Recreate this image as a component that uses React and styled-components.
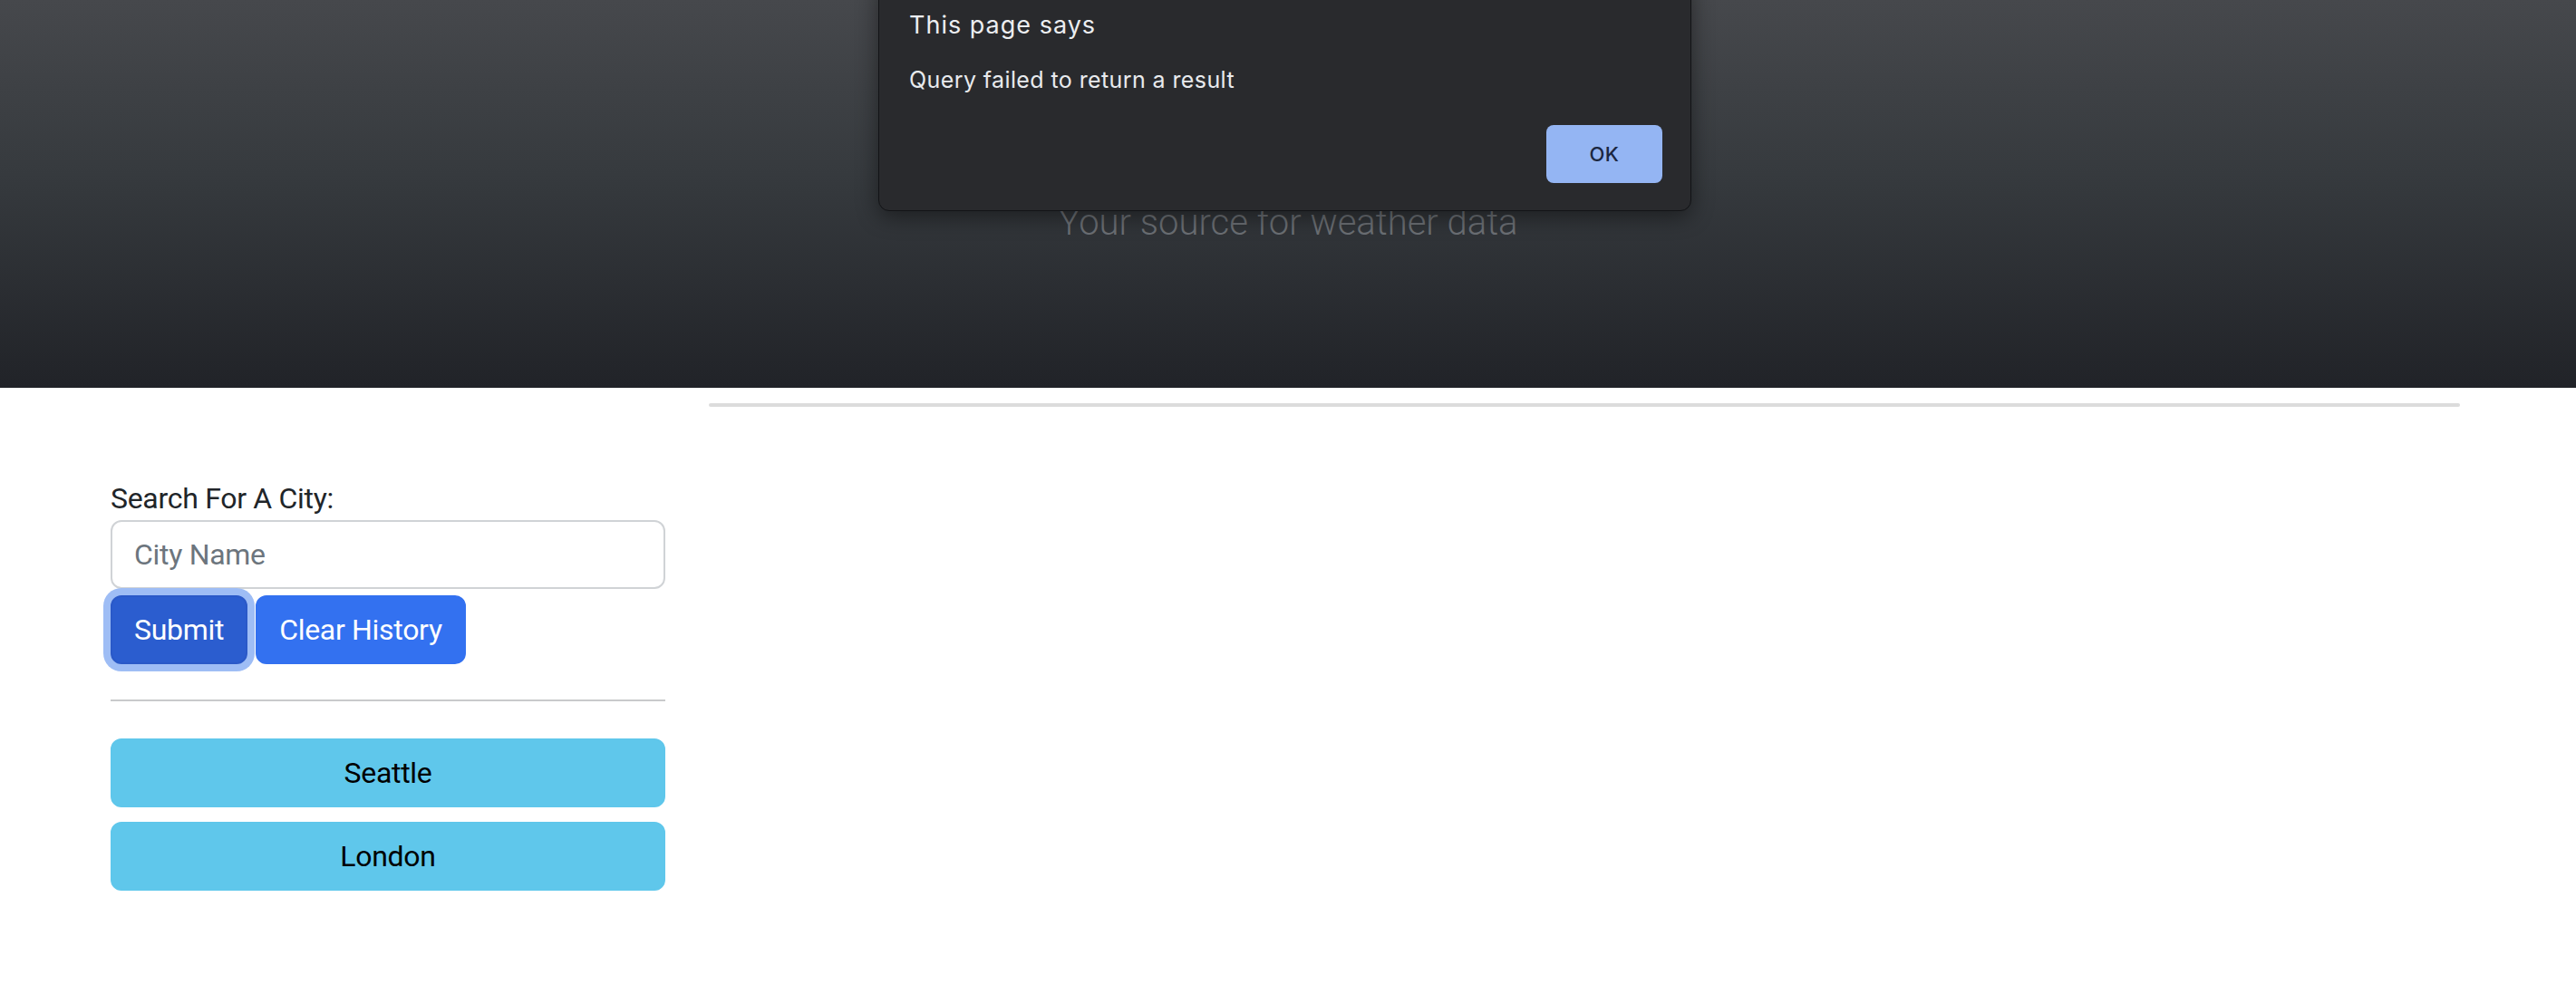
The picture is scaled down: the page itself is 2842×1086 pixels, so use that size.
import React from "react";
import styled, { createGlobalStyle } from "styled-components";

const GlobalStyle = createGlobalStyle`
  html, body { margin: 0; padding: 0; background: #ffffff; }
  body {
    font-family: Roboto, "Liberation Sans", Arial, sans-serif;
    color: #212529;
    font-size: 32px;
    line-height: 48px;
  }
  * { box-sizing: border-box; }
`;

const Page = styled.div`
  position: relative;
  width: 100%;
  min-height: 1086px;
`;

const Header = styled.header`
  height: 428px;
  background: linear-gradient(180deg, #46484c 0%, #363a3e 45%, #212328 100%);
  display: flex;
  flex-direction: column;
  align-items: center;
  padding-top: 216px;
`;

const Lead = styled.p`
  margin: 0;
  font-size: 40px;
  line-height: 60px;
  font-weight: 300;
  color: #6b6f74;
`;

const Container = styled.main`
  width: 2640px;
  margin-left: 98px;
  display: flex;
`;

const SideCol = styled.section`
  width: 660px;
  padding: 98px 24px 0;
  display: flex;
  flex-direction: column;
  letter-spacing: -0.3px;
`;

const MainCol = styled.section`
  flex: 1;
  padding: 17px 24px 0;
`;

const Divider = styled.div`
  height: 4px;
  border-radius: 2px;
  background: #dcdcdc;
`;

const Label = styled.label`
  display: block;
  font-size: 32px;
  line-height: 48px;
  font-weight: 400;
  color: #212529;
`;

const Input = styled.input`
  display: block;
  width: 100%;
  height: 76px;
  padding: 12px 24px;
  font-family: inherit;
  font-size: 32px;
  line-height: 48px;
  letter-spacing: -0.3px;
  color: #212529;
  background: #fff;
  border: 2px solid #d0d3d6;
  border-radius: 12px;
  outline: none;
  &::placeholder { color: #6c757d; }
`;

const ButtonRow = styled.div`
  display: flex;
  gap: 9px;
  margin-top: 7px;
`;

const Button = styled.button`
  height: 76px;
  padding: 12px 24px;
  font-family: inherit;
  font-size: 32px;
  line-height: 48px;
  font-weight: 400;
  letter-spacing: -0.3px;
  color: #ffffff;
  background: ${(p) => (p.$active ? "#2b5dcf" : "#3371f0")};
  border: 2px solid ${(p) => (p.$active ? "#2a59c8" : "#3371f0")};
  border-radius: 12px;
  box-shadow: ${(p) => (p.$active ? "0 0 0 8px #9ebdf5" : "none")};
  cursor: pointer;
`;

const Rule = styled.hr`
  margin: 39px 0 41px;
  border: 0;
  height: 2px;
  background: #c9cacb;
`;

const History = styled.div`
  display: flex;
  flex-direction: column;
  gap: 16px;
`;

const CityButton = styled.button`
  width: 100%;
  height: 76px;
  font-family: inherit;
  font-size: 32px;
  line-height: 48px;
  font-weight: 400;
  letter-spacing: -0.3px;
  color: #000000;
  background: #5fc7eb;
  border: 2px solid #5fc7eb;
  border-radius: 12px;
  cursor: pointer;
`;

const Dialog = styled.div`
  position: absolute;
  top: -24px;
  left: 969px;
  width: 897px;
  height: 257px;
  background: #292a2d;
  border: 1px solid #121316;
  border-radius: 12px;
  box-shadow: 0 6px 24px rgba(0, 0, 0, 0.45);
  padding: 35px 31px 30px 33px;
  display: flex;
  flex-direction: column;
  font-family: Inter, "Noto Sans", sans-serif;
`;

const DialogTitle = styled.div`
  font-size: 27px;
  line-height: 32px;
  letter-spacing: 1px;
  color: #eceef1;
`;

const DialogMessage = styled.div`
  margin-top: 29px;
  font-size: 25px;
  line-height: 30px;
  letter-spacing: 0.4px;
  color: #e8eaed;
`;

const DialogActions = styled.div`
  margin-top: auto;
  display: flex;
  justify-content: flex-end;
`;

const OkButton = styled.button`
  width: 128px;
  height: 64px;
  border: 0;
  border-radius: 8px;
  background: #94b5f3;
  color: #1b2741;
  font-family: Inter, "Noto Sans", sans-serif;
  font-size: 22px;
  font-weight: 500;
  letter-spacing: 0.5px;
  cursor: pointer;
`;

export default function App() {
  return (
    <Page>
      <GlobalStyle />
      <Header>
        <Lead>Your source for weather data</Lead>
      </Header>
      <Container>
        <SideCol>
          <Label htmlFor="city">Search For A City:</Label>
          <Input id="city" placeholder="City Name" />
          <ButtonRow>
            <Button $active>Submit</Button>
            <Button>Clear History</Button>
          </ButtonRow>
          <Rule />
          <History>
            <CityButton>Seattle</CityButton>
            <CityButton>London</CityButton>
          </History>
        </SideCol>
        <MainCol>
          <Divider />
        </MainCol>
      </Container>
      <Dialog role="alertdialog">
        <DialogTitle>This page says</DialogTitle>
        <DialogMessage>Query failed to return a result</DialogMessage>
        <DialogActions>
          <OkButton>OK</OkButton>
        </DialogActions>
      </Dialog>
    </Page>
  );
}
